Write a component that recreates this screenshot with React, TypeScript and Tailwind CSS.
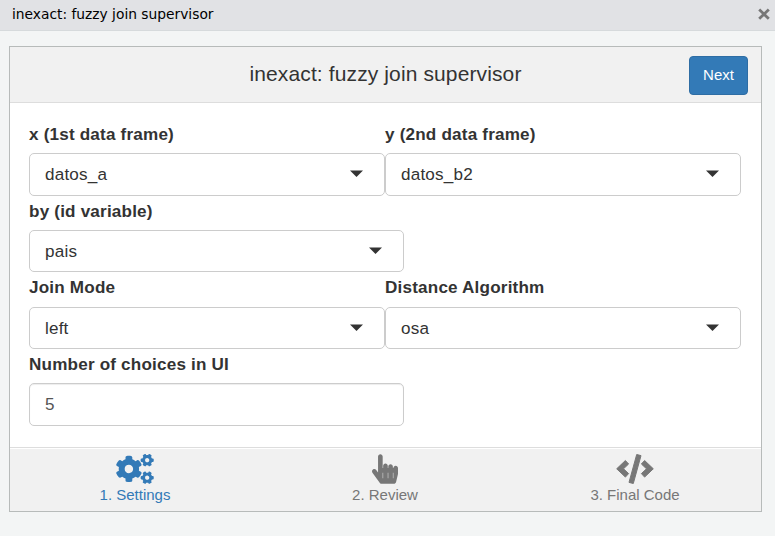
import React from "react";
import { FaCogs, FaHandPointer } from "react-icons/fa";

function Label({ children }: { children: React.ReactNode }) {
  return <div className="h-[24px] text-[17.1px] leading-[24px] font-bold tracking-[0.19px] whitespace-nowrap">{children}</div>;
}

function Select({ label, value, short, wide, loose }: { label: string; value: string; short?: boolean; wide?: boolean; loose?: boolean }) {
  return (
    <div className={wide ? "w-[375px]" : "w-[356px]"}>
      <Label>{label}</Label>
      <div
        className={`flex items-center justify-between rounded-[5px] border border-[#ccc] bg-white pr-[21px] pl-[15px] text-[17.1px] tracking-[0.19px] ${
          short ? "h-[42px]" : "h-[43px]"
        } ${loose ? "mt-[7px]" : "mt-[6px]"}`}
      >
        <span className="leading-[25px]">{value}</span>
        <svg className="mb-[2px] h-[7px] w-[13px]" viewBox="0 0 13 7">
          <path d="M0 0.5H13L6.5 7Z" fill="#333" />
        </svg>
      </div>
    </div>
  );
}

function CodeIcon() {
  return (
    <svg className="h-[30px] w-[38px]" viewBox="0 0 38 30" fill="currentColor" stroke="currentColor" strokeWidth="1" strokeLinejoin="round">
      <path d="M0.7 14.8L9.4 6.5L12.6 10L7.5 14.8L12.6 19.6L9.4 23.1Z" />
      <path d="M37.3 14.8L28.6 6.5L25.4 10L30.5 14.8L25.4 19.6L28.6 23.1Z" />
      <path d="M20.7 0.5L25 1.6L17.3 29.5L13 28.4Z" />
    </svg>
  );
}

function Tab({ icon, label, active }: { icon: React.ReactNode; label: string; active?: boolean }) {
  return (
    <div className={`flex w-[250px] flex-col items-center pt-[6px] ${active ? "text-[#337ab7]" : "text-[#777]"}`}>
      <div className="flex h-[30px] items-center">{icon}</div>
      <span className="mt-[1px] text-[15px] leading-[20px]">{label}</span>
    </div>
  );
}

export default function App() {
  return (
    <div className="flex h-[536px] w-[775px] flex-col overflow-hidden bg-[#f3f5f5] font-['Liberation_Sans',Arial,sans-serif] text-[#333]">
      <div className="flex h-[31px] shrink-0 items-center justify-between border-b border-[#d6dadc] bg-[#e1e2e5] pr-[5px] pb-[2px] pl-[12px]">
        <span className="font-['DejaVu_Sans',sans-serif] text-[13.8px] leading-[20px] text-black">inexact: fuzzy join supervisor</span>
        <svg className="h-[12px] w-[12px]" viewBox="0 0 12 12">
          <path d="M1.2 1.5L10.8 10.8M10.8 1.5L1.2 10.8" stroke="#777" strokeWidth="2.8" />
        </svg>
      </div>
      <div className="mt-[15px] ml-[9px] flex h-[466px] w-[753px] flex-col border border-[#b7bbba] bg-white">
        <div className="grid h-[56px] w-full shrink-0 grid-cols-[1fr_auto_1fr] items-center border-b border-[#ddd] bg-[#f1f1f1] pt-[1px] pr-[13px] pl-[13px]">
          <span />
          <span className="mb-[3px] text-[21px] leading-[24px] tracking-[0.12px] whitespace-nowrap">inexact: fuzzy join supervisor</span>
          <button className="mt-[1px] h-[39px] w-[59px] justify-self-end rounded-[4px] border border-[#2e6da4] bg-[#337ab7] text-[15px] text-white">Next</button>
        </div>
        <div className="flex h-[344px] flex-col px-[19px] pt-[20px]">
          <div className="flex">
            <Select label="x (1st data frame)" value="datos_a" />
            <Select label="y (2nd data frame)" value="datos_b2" />
          </div>
          <div className="mt-[4px]">
            <Select label="by (id variable)" value="pais" short wide />
          </div>
          <div className="mt-[4px] flex">
            <Select label="Join Mode" value="left" short loose />
            <Select label="Distance Algorithm" value="osa" short loose />
          </div>
          <div className="mt-[4px] w-[375px]">
            <Label>Number of choices in UI</Label>
            <div className="mt-[6px] flex h-[43px] items-center rounded-[5px] border border-[#ccc] pl-[15px] text-[17.1px] text-[#555] shadow-[inset_0_1px_1px_rgba(0,0,0,0.075)]">5</div>
          </div>
        </div>
        <div className="flex flex-1 border-t border-[#ddd] bg-[#f1f1f1] shadow-[inset_0_1px_0_#fff]">
          <Tab icon={<FaCogs className="h-[30px] w-[38px]" />} label="1. Settings" active />
          <Tab icon={<FaHandPointer className="h-[30px] w-[26px]" />} label="2. Review" />
          <Tab icon={<CodeIcon />} label="3. Final Code" />
        </div>
      </div>
    </div>
  );
}
